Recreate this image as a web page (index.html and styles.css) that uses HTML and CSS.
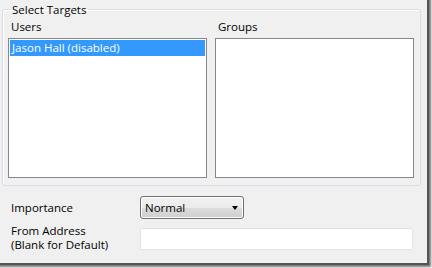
FILE: index.html
```html
<!DOCTYPE html>
<html>
<head>
<meta charset="utf-8">
<link rel="stylesheet" href="styles.css">
</head>
<body>
<div class="window">
  <fieldset class="targets">
    <legend>Select Targets</legend>
    <div class="cols">
      <div class="col">
        <div class="label">Users</div>
        <div class="list">
          <div class="item selected">Jason Hall (disabled)</div>
        </div>
      </div>
      <div class="col">
        <div class="label">Groups</div>
        <div class="list"></div>
      </div>
    </div>
  </fieldset>
  <div class="form">
    <div class="flabel center">Importance</div>
    <div class="select"><span>Normal</span><span class="arrow"></span></div>
    <div class="flabel">From Address<br>(Blank for Default)</div>
    <div class="textbox"></div>
  </div>
</div>
</body>
</html>
```
FILE: styles.css
```css
html {
  overflow: hidden;
  background: #ffffff;
}
html, body {
  margin: 0;
  padding: 0;
}
body {
  font-family: "Open Sans", "Noto Sans", sans-serif;
  font-size: 11.5px;
  color: #000;
  min-height: 268px;
  padding-top: 1px;
  box-sizing: border-box;
}
.window {
  width: 437px;
  height: 273px;
  margin: -11px 0 0 -10px;
  padding: 12px 0 0 10px;
  background: #f0f0f0;
  box-shadow: 2px 2px 0 0 #555, 3px 3px 2px 1px rgba(0, 0, 0, 0.55);
  overflow: hidden;
  box-sizing: border-box;
}
.targets {
  margin: 0 6px 0 2px;
  padding: 2px 6px 7px 5px;
  border: 1px solid #d5dfe5;
  border-radius: 3px;
  box-shadow: inset 1px 1px 0 #fff;
}
.targets legend {
  margin-left: 2px;
  padding: 0 2px;
  line-height: 15px;
}
.cols {
  display: flex;
  gap: 8px;
}
.col {
  width: 199px;
}
.label {
  line-height: 15px;
  height: 15px;
  padding-left: 3px;
  margin-bottom: 4px;
}
.list {
  height: 140px;
  box-sizing: border-box;
  border: 1px solid #828790;
  background: #fff;
  padding: 1px;
}
.item {
  line-height: 16px;
  height: 16px;
  padding-left: 2px;
}
.item.selected {
  background: #3399ff;
  color: #fff;
}
.form {
  display: grid;
  grid-template-columns: 129px 273px;
  row-gap: 9px;
  margin-top: 10px;
  padding-left: 11px;
}
.flabel {
  line-height: 14px;
  margin-top: -4px;
}
.flabel.center {
  margin-top: 0;
  align-self: center;
}
.select {
  width: 104px;
  height: 23px;
  box-sizing: border-box;
  border: 1px solid #707070;
  border-radius: 3px;
  background: linear-gradient(#f2f2f2 0%, #ebebeb 50%, #dddddd 51%, #cfcfcf 100%);
  box-shadow: inset 0 0 0 1px #fcfcfc;
  display: flex;
  align-items: center;
  justify-content: space-between;
  padding: 0 4px 0 4px;
}
.arrow {
  width: 0;
  height: 0;
  border-left: 3.5px solid transparent;
  border-right: 3.5px solid transparent;
  border-top: 4px solid #000;
  margin-right: 1px;
}
.textbox {
  width: 273px;
  height: 22px;
  box-sizing: border-box;
  background: #fff;
  border: 1px solid #e2e3ea;
  border-top-color: #dcdfe6;
  border-radius: 2px;
}
```
